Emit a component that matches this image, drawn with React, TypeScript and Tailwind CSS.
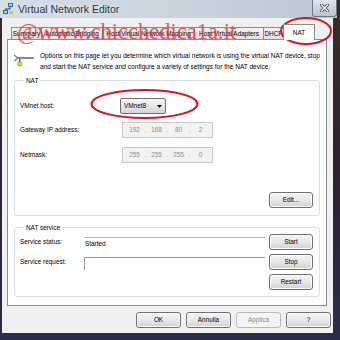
import React from 'react';

const TABS = [
  { label: 'Summary', w: 'w-[31px]' },
  { label: 'Automatic Bridging', w: 'w-[62px]' },
  { label: 'Host Virtual Network Mapping', w: 'w-[93px]' },
  { label: 'Host Virtual Adapters', w: 'w-[70px]' },
  { label: 'DHCP', w: 'w-[21px]' },
];

function Btn({ children, disabled = false, w = 'w-[45px]' }: { children: React.ReactNode; disabled?: boolean; w?: string }) {
  return (
    <div
      className={`${w} h-[16px] shrink-0 flex items-center justify-center rounded-[3px] border text-[6.4px] leading-none ${
        disabled
          ? 'border-[#b5b9bc] bg-[#f4f4f4] text-[#8a8a8a]'
          : 'border-[#707070] bg-gradient-to-b from-[#f4f4f4] via-[#e8e8e8] to-[#d2d2d2] text-black shadow-[inset_0_0_0_1px_#fbfbfb]'
      }`}
    >
      {children}
    </div>
  );
}

function IpBox({ parts }: { parts: string[] }) {
  return (
    <div className="w-[91px] h-[16px] flex items-center pl-[3px] border border-[#c9c9c9] bg-[#f2f2f2] text-[6.4px] text-[#8e8e8e]">
      {parts.map((p, i) => (
        <React.Fragment key={i}>
          {i > 0 && <span className="w-[5px] text-center">.</span>}
          <span className="w-[17px] text-center">{p}</span>
        </React.Fragment>
      ))}
    </div>
  );
}

export default function App() {
  return (
    <div className="relative w-[340px] h-[340px] overflow-hidden bg-gradient-to-b from-[#3b2b27] via-[#2e2230] to-[#2a2d4a] font-['Liberation_Sans',Arial,sans-serif] text-[6.4px] text-black">
      {/* title bar */}
      <div className="w-[337px] h-[18px] flex items-center pl-[3px] bg-gradient-to-r from-[#d5dde6] via-[#cad4df] to-[#bac7d4]">
        <svg width="11" height="12" viewBox="0 0 11 12" className="shrink-0">
          <rect x="5" y="0" width="5" height="4" fill="#2c6bb8" />
          <rect x="6" y="1" width="3" height="2" fill="#9fd3ff" />
          <rect x="0" y="7" width="5" height="4" fill="#2c6bb8" />
          <rect x="1" y="8" width="3" height="2" fill="#9fd3ff" />
          <path d="M7 4 V6 H2.5 V7" stroke="#3a3a3a" strokeWidth="1" fill="none" />
          <rect x="6" y="8" width="4" height="3" fill="#e5c22a" />
        </svg>
        <span className="ml-[4px] text-[10.5px] leading-none text-[#2a3440] [text-shadow:0_0_6px_#ffffff]">Virtual Network Editor</span>
        <div className="ml-auto self-start w-[25px] h-[17px] flex items-center justify-center rounded-b-[3px] border border-t-0 border-[#6b7888] bg-gradient-to-b from-[#dfe6ee] to-[#b9c5d2]">
          <svg width="9" height="8" viewBox="0 0 9 8">
            <path d="M1.5 1 L7.5 7 M7.5 1 L1.5 7" stroke="#3c4450" strokeWidth="3" strokeLinecap="square" />
            <path d="M1.5 1 L7.5 7 M7.5 1 L1.5 7" stroke="#ffffff" strokeWidth="1.4" strokeLinecap="square" />
          </svg>
        </div>
      </div>

      {/* client area */}
      <div className="ml-[2px] w-[331px] h-[315px] flex flex-col bg-[#f0f0f0]">
        {/* tabs */}
        <div className="mt-[6px] ml-[9px] h-[15px] flex items-end">
          {TABS.map((t) => (
            <div
              key={t.label}
              className={`${t.w} h-[12px] -mr-px shrink-0 flex items-center justify-center whitespace-nowrap border border-b-0 border-[#898c95] bg-gradient-to-b from-[#f3f3f3] to-[#e2e2e2]`}
            >
              {t.label}
            </div>
          ))}
          <div className="relative z-10 w-[32px] h-[16px] -mb-px shrink-0 flex items-center justify-center border border-b-0 border-[#898c95] bg-white">
            NAT
          </div>
        </div>

        {/* tab page */}
        <div className="ml-[5px] w-[320px] h-[267px] flex flex-col px-[6px] border border-[#898c95] bg-white">
          <div className="mt-[10px] flex items-start">
            <svg width="20" height="16" viewBox="0 0 20 16" className="shrink-0 mt-[3px]">
              <path d="M0 2 L4 5" stroke="#777" strokeWidth="1.2" />
              <path d="M0 8 L4 5" stroke="#777" strokeWidth="1.2" />
              <rect x="4" y="4" width="16" height="2" fill="#8a8a8a" />
              <rect x="5" y="6" width="1.5" height="4" fill="#666" />
              <circle cx="5.7" cy="11" r="2.2" fill="#e8d21e" stroke="#9c8a10" strokeWidth="0.6" />
            </svg>
            <div className="ml-[6px] text-[6.55px] leading-[11px] whitespace-nowrap">
              Options on this page let you determine which virtual network is using the virtual NAT device, stop
              <br />
              and start the NAT service and configure a variety of settings for the NAT device.
            </div>
          </div>

          {/* NAT group */}
          <fieldset className="mt-[3px] h-[141px] rounded-[3px] border border-[#d5dfe5] pl-[5px] pr-[6px]">
            <legend className="ml-[4px] px-[2px] leading-[11px]">NAT</legend>
            <div className="mt-[12px] flex items-center">
              <span className="w-[100px]">VMnet host:</span>
              <div className="w-[46px] h-[16px] flex items-center justify-between pl-[3px] pr-[3px] rounded-[2px] border border-[#707070] bg-gradient-to-b from-[#f4f4f4] via-[#e8e8e8] to-[#d4d4d4]">
                <span>VMnet8</span>
                <svg width="5" height="3" viewBox="0 0 5 3">
                  <path d="M0 0 H5 L2.5 3 Z" fill="#000" />
                </svg>
              </div>
            </div>
            <div className="mt-[8px] flex items-center">
              <span className="w-[102px]">Gateway IP address:</span>
              <IpBox parts={['192', '168', '80', '2']} />
            </div>
            <div className="mt-[9px] flex items-center">
              <span className="w-[102px]">Netmask:</span>
              <IpBox parts={['255', '255', '255', '0']} />
            </div>
            <div className="mt-[29px] flex justify-end">
              <Btn w="w-[44px]">Edit...</Btn>
            </div>
          </fieldset>

          {/* NAT service group */}
          <fieldset className="mt-[6px] h-[75px] rounded-[3px] border border-[#d5dfe5] pl-[5px] pr-[6px]">
            <legend className="ml-[4px] px-[2px] leading-[11px]">NAT service</legend>
            <div className="mt-[1px] flex items-start">
              <span className="w-[64px] self-center">Service status:</span>
              <div className="mt-[3px] w-[181px] h-[13px] pl-[1px] border-t border-[#b7b7b7] leading-[11px]">Started</div>
              <div className="ml-auto">
                <Btn w="w-[44px]">Start</Btn>
              </div>
            </div>
            <div className="mt-[4px] flex items-start">
              <span className="w-[64px] self-center">Service request:</span>
              <div className="mt-[3px] w-[181px] h-[13px] border-t border-l border-[#9a9a9a]" />
              <div className="ml-auto">
                <Btn w="w-[44px]">Stop</Btn>
              </div>
            </div>
            <div className="mt-[4px] flex justify-end">
              <Btn w="w-[44px]">Restart</Btn>
            </div>
          </fieldset>
        </div>

        {/* dialog buttons */}
        <div className="mt-[6px] pr-[2px] flex justify-end gap-[5px]">
          <Btn>OK</Btn>
          <Btn>Annulla</Btn>
          <Btn disabled>Applica</Btn>
          <Btn>?</Btn>
        </div>
      </div>

      {/* watermark and red marks drawn over the screenshot */}
      <div className="absolute left-[17px] top-[21px] text-[22.5px] leading-[22px] font-['Liberation_Serif',serif] text-[#e8303a] opacity-80 whitespace-nowrap pointer-events-none">
        @www.chicchedica1a.it
      </div>
      <svg className="absolute left-0 top-0 pointer-events-none" width="340" height="340" viewBox="0 0 340 340">
        <ellipse cx="306" cy="31" rx="25" ry="13" fill="none" stroke="#e0101c" strokeWidth="2" />
        <ellipse cx="144.5" cy="104" rx="53" ry="14" fill="none" stroke="#e0101c" strokeWidth="2" />
      </svg>
    </div>
  );
}
